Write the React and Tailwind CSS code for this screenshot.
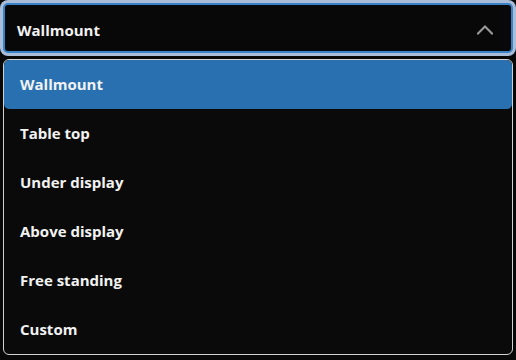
import { useState } from "react";

const OPTIONS = ["Wallmount", "Table top", "Under display", "Above display", "Free standing", "Custom"];

function Chevron({ up }) {
  return (
    <svg width="16" height="10" viewBox="0 0 16 10" fill="none" className="text-[#9a9a9a]">
      <polyline
        points={up ? "1,8.5 8,1.5 15,8.5" : "1,1.5 8,8.5 15,1.5"}
        stroke="currentColor"
        strokeWidth="2"
        strokeLinecap="square"
      />
    </svg>
  );
}

export default function App() {
  const [open, setOpen] = useState(true);
  const [value, setValue] = useState("Wallmount");
  const [hovered, setHovered] = useState("Wallmount");

  return (
    <div
      className="w-[516px] h-[360px] bg-[#080808] overflow-hidden pt-[3px] px-[3px]"
      style={{ fontFamily: '"Open Sans", sans-serif' }}
    >
      <button
        onClick={() => setOpen(o => !o)}
        className="w-full h-[50px] flex items-center justify-between pl-[12px] pr-[18px] pt-[4px] bg-[#080808] border-2 border-[#3a82c8] rounded-[5px] ring-[3px] ring-[#a9bdd8] text-[15px] font-bold text-[#f2f2f2]"
      >
        <span>{value}</span>
        <Chevron up={open} />
      </button>

      {open && (
        <ul className="mt-[6px] border border-[#d2d2d2] rounded-[6px] bg-[#0a0a0a] overflow-hidden">
          {OPTIONS.map(opt => (
            <li
              key={opt}
              onMouseEnter={() => setHovered(opt)}
              onClick={() => { setValue(opt); setOpen(false); }}
              className={`h-[49px] flex items-center px-[16px] text-[15px] font-bold text-[#f2f2f2] rounded-[5px] cursor-pointer ${
                hovered === opt ? "bg-[#2970b0]" : ""
              }`}
            >
              {opt}
            </li>
          ))}
        </ul>
      )}
    </div>
  );
}
